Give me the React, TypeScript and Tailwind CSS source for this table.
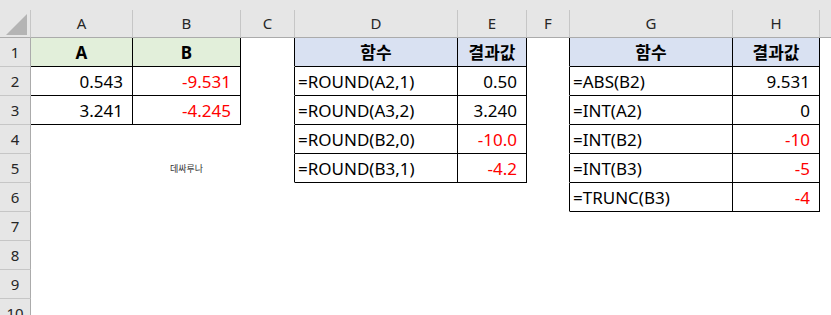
import React from 'react';

type Align = 'l' | 'r' | 'c';

interface CellData {
  v: string;
  align?: Align;
  red?: boolean;
  bold?: boolean;
  fill?: 'green' | 'blue';
  small?: boolean;
}

// last column is only partly on screen, so its letter is left blank
const COLS = ['A', 'B', 'C', 'D', 'E', 'F', 'G', 'H', ''];
const ROWS = [1, 2, 3, 4, 5, 6, 7, 8, 9, 10];

// sheet contents keyed by "row-col" (col index 1 = A)
const cells: Record<string, CellData> = {
  '1-1': { v: 'A', align: 'c', bold: true, fill: 'green' },
  '1-2': { v: 'B', align: 'c', bold: true, fill: 'green' },
  '1-4': { v: '함수', align: 'c', bold: true, fill: 'blue' },
  '1-5': { v: '결과값', align: 'c', bold: true, fill: 'blue' },
  '1-7': { v: '함수', align: 'c', bold: true, fill: 'blue' },
  '1-8': { v: '결과값', align: 'c', bold: true, fill: 'blue' },

  '2-1': { v: '0.543', align: 'r' },
  '2-2': { v: '-9.531', align: 'r', red: true },
  '2-4': { v: '=ROUND(A2,1)' },
  '2-5': { v: '0.50', align: 'r' },
  '2-7': { v: '=ABS(B2)' },
  '2-8': { v: '9.531', align: 'r' },

  '3-1': { v: '3.241', align: 'r' },
  '3-2': { v: '-4.245', align: 'r', red: true },
  '3-4': { v: '=ROUND(A3,2)' },
  '3-5': { v: '3.240', align: 'r' },
  '3-7': { v: '=INT(A2)' },
  '3-8': { v: '0', align: 'r' },

  '4-4': { v: '=ROUND(B2,0)' },
  '4-5': { v: '-10.0', align: 'r', red: true },
  '4-7': { v: '=INT(B2)' },
  '4-8': { v: '-10', align: 'r', red: true },

  '5-2': { v: '데싸루나', align: 'c', small: true },
  '5-4': { v: '=ROUND(B3,1)' },
  '5-5': { v: '-4.2', align: 'r', red: true },
  '5-7': { v: '=INT(B3)' },
  '5-8': { v: '-5', align: 'r', red: true },

  '6-7': { v: '=TRUNC(B3)' },
  '6-8': { v: '-4', align: 'r', red: true },
};

// bordered ranges: A1:B3, D1:E5, G1:H6
const inTable = (r: number, c: number) =>
  (r <= 3 && c >= 1 && c <= 2) ||
  (r <= 5 && c >= 4 && c <= 5) ||
  (r <= 6 && c >= 7 && c <= 8);

const font = { fontFamily: '"Noto Sans", "Noto Sans CJK KR", sans-serif' };

const Corner = () => (
  <div className="relative border-r border-b border-r-[#c6c6c6] border-b-[#ababab] bg-[#e6e6e6]">
    <svg className="absolute left-[6px] top-[4px]" width="21" height="21" viewBox="0 0 21 21">
      <polygon points="21,0 21,21 0,21" fill="#b4b4b4" />
    </svg>
  </div>
);

const SheetCell = ({ r, c }: { r: number; c: number }) => {
  const d = cells[`${r}-${c}`];
  const right = inTable(r, c) || inTable(r, c + 1);
  const bottom = inTable(r, c);
  const align =
    d?.align === 'r'
      ? 'justify-end pr-[9px]'
      : d?.align === 'c'
        ? 'justify-center'
        : 'justify-start pl-[3px]';
  const bg = d?.fill === 'green' ? 'bg-[#e2efda]' : d?.fill === 'blue' ? 'bg-[#d9e1f2]' : 'bg-white';
  return (
    <div
      className={`flex items-center overflow-visible whitespace-nowrap border-r border-b ${
        right ? 'border-r-black' : 'border-r-transparent'
      } ${bottom ? 'border-b-black' : 'border-b-transparent'} ${bg} ${align}`}
    >
      {d && (
        <span
          className={`${d.small ? 'text-[9px] text-[#333]' : 'text-[17px]'} ${
            d.red ? 'text-[#ff0000]' : d.small ? '' : 'text-black'
          } ${d.bold ? 'font-bold' : 'font-normal'} leading-none`}
        >
          {d.v}
        </span>
      )}
    </div>
  );
};

export default function App() {
  return (
    <div className="h-[315px] w-[831px] overflow-hidden bg-white" style={font}>
      <div className="h-[10px] bg-[#e6e6e6]" />
      <div className="grid w-max grid-cols-[31px_102px_108px_54px_163px_69px_43px_163px_87px_120px] grid-rows-[28px_repeat(10,29px)]">
        <Corner />
        {COLS.map((col, i) => (
          <div
            key={i}
            className="flex items-center justify-center border-r border-b border-r-[#c6c6c6] border-b-[#ababab] bg-[#e6e6e6] text-[15px] text-[#262626]"
          >
            {col}
          </div>
        ))}
        {ROWS.map((r) => (
          <React.Fragment key={r}>
            <div className="flex items-center justify-center border-r border-b border-r-[#ababab] border-b-[#c6c6c6] bg-[#e6e6e6] text-[15px] text-[#262626]">
              {r}
            </div>
            {COLS.map((_, i) => (
              <SheetCell key={i} r={r} c={i + 1} />
            ))}
          </React.Fragment>
        ))}
      </div>
    </div>
  );
}
